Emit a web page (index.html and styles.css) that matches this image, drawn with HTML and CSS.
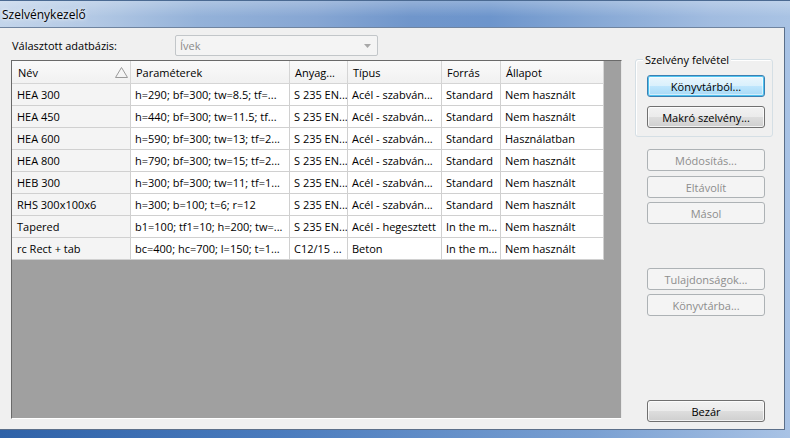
FILE: index.html
```html
<!DOCTYPE html>
<html lang="hu">
<head>
<meta charset="utf-8">
<title>Szelvénykezelő</title>
<link rel="stylesheet" href="styles.css">
</head>
<body>
<div class="frame">
  <div class="titlebar"><span class="title">Szelvénykezelő</span></div>
  <div class="client">
    <div class="main">
      <div class="dbrow">
        <span class="dblabel">Választott adatbázis:</span>
        <div class="combo">
          <span class="combo-text">Ívek</span>
          <svg class="combo-arrow" width="7" height="4" viewBox="0 0 7 4"><polygon points="0,0 7,0 3.5,4" fill="#a8a8a8"/></svg>
        </div>
      </div>
      <div class="list">
        <table class="grid">
          <colgroup>
            <col class="c1"><col class="c2"><col class="c3"><col class="c4"><col class="c5"><col class="c6">
          </colgroup>
          <thead>
            <tr>
              <th class="first"><div class="th-inner"><span>Név</span><svg class="sort" width="13" height="11" viewBox="0 0 13 11"><polygon points="6.5,0.5 12.5,10.5 0.5,10.5" fill="none" stroke="#9a9a9a" stroke-width="1"/></svg></div></th>
              <th>Paraméterek</th>
              <th>Anyag...</th>
              <th>Típus</th>
              <th>Forrás</th>
              <th>Állapot</th>
            </tr>
          </thead>
          <tbody>
            <tr><td class="first">HEA 300</td><td>h=290; bf=300; tw=8.5; tf=...</td><td>S 235 EN...</td><td>Acél - szabván...</td><td>Standard</td><td>Nem használt</td></tr>
            <tr><td class="first">HEA 450</td><td>h=440; bf=300; tw=11.5; tf...</td><td>S 235 EN...</td><td>Acél - szabván...</td><td>Standard</td><td>Nem használt</td></tr>
            <tr><td class="first">HEA 600</td><td>h=590; bf=300; tw=13; tf=2...</td><td>S 235 EN...</td><td>Acél - szabván...</td><td>Standard</td><td>Használatban</td></tr>
            <tr><td class="first">HEA 800</td><td>h=790; bf=300; tw=15; tf=2...</td><td>S 235 EN...</td><td>Acél - szabván...</td><td>Standard</td><td>Nem használt</td></tr>
            <tr><td class="first">HEB 300</td><td>h=300; bf=300; tw=11; tf=1...</td><td>S 235 EN...</td><td>Acél - szabván...</td><td>Standard</td><td>Nem használt</td></tr>
            <tr><td class="first">RHS 300x100x6</td><td>h=300; b=100; t=6; r=12</td><td>S 235 EN...</td><td>Acél - szabván...</td><td>Standard</td><td>Nem használt</td></tr>
            <tr><td class="first">Tapered</td><td>b1=100; tf1=10; h=200; tw=...</td><td>S 235 EN...</td><td>Acél - hegesztett</td><td>In the m...</td><td>Nem használt</td></tr>
            <tr><td class="first">rc Rect + tab</td><td>bc=400; hc=700; l=150; t=1...</td><td>C12/15 ...</td><td>Beton</td><td>In the m...</td><td>Nem használt</td></tr>
          </tbody>
        </table>
      </div>
    </div>
    <div class="side">
      <div class="group">
        <span class="group-label">Szelvény felvétel</span>
        <button class="btn default">Könyvtárból...</button>
        <button class="btn gap9">Makró szelvény...</button>
      </div>
      <button class="btn disabled m12">Módosítás...</button>
      <button class="btn disabled m5">Eltávolít</button>
      <button class="btn disabled m4">Másol</button>
      <button class="btn disabled m44">Tulajdonságok...</button>
      <button class="btn disabled m4">Könyvtárba...</button>
      <button class="btn close">Bezár</button>
    </div>
  </div>
</div>
</body>
</html>
```

FILE: styles.css
```css
html, body {
  margin: 0;
  padding: 0;
  width: 790px;
  height: 438px;
  overflow: hidden;
}

body {
  font-family: "Open Sans", "Noto Sans", sans-serif;
  font-size: 11px;
  color: #000;
  background: linear-gradient(to right, #2f62a8 0%, #4a7bbd 35%, #7aa0d2 75%, #a9c3e5 100%);
}

.frame {
  display: flex;
  flex-direction: column;
  width: 790px;
  height: 438px;
}

.titlebar {
  height: 26px;
  border-top: 1px solid #4b6a92;
  display: flex;
  align-items: center;
  padding-left: 2px;
  background:
    linear-gradient(to bottom, rgba(255,255,255,0.25), rgba(255,255,255,0) 60%),
    linear-gradient(to right, #c3d5eb 0%, #b2c8e4 12%, #94b2d9 25%, #86a6d3 40%, #7096cb 52%, #6d95cc 62%, #86a8d5 75%, #a1bce0 90%, #a9c3e4 100%);
}

.title {
  font-size: 12px;
  color: #000;
  text-shadow: 0 0 6px rgba(255,255,255,0.9), 0 0 3px rgba(255,255,255,0.8);
}

.client {
  display: flex;
  width: 784px;
  height: 401px;
  background: #f0f0f0;
  border-top: 1px solid #6f84a0;
  border-right: 1px solid #5b6f8a;
  border-bottom: 1px solid #5b6f8a;
}

.main {
  display: flex;
  flex-direction: column;
  padding-left: 11px;
  padding-top: 7px;
  width: 611px;
}

.dbrow {
  display: flex;
  align-items: center;
  height: 21px;
}

.dblabel {
  width: 163px;
  padding-left: 1px;
}

.combo {
  width: 201px;
  height: 19px;
  border: 1px solid #c2c6c9;
  border-radius: 2px;
  background: #f4f4f4;
  display: flex;
  align-items: center;
  justify-content: space-between;
  padding: 0 6px 0 4px;
  box-sizing: border-box;
  width: 203px;
  height: 21px;
  color: #8a8a8a;
}

.list {
  margin-top: 4px;
  width: 611px;
  height: 359px;
  box-sizing: border-box;
  background: #a0a0a0;
  border-top: 1px solid #6a6a6a;
  border-left: 1px solid #6a6a6a;
  border-right: 1px solid #e8e8e8;
  border-bottom: 1px solid #ffffff;
}

.grid {
  border-collapse: separate;
  border-spacing: 0;
  table-layout: fixed;
  width: 592px;
  background: #fff;
}

.c1 { width: 119px; }
.c2 { width: 159px; }
.c3 { width: 58px; }
.c4 { width: 94px; }
.c5 { width: 59px; }
.c6 { width: 103px; }

.grid th {
  height: 23px;
  padding: 0 0 0 5px;
  text-align: left;
  font-weight: normal;
  background: linear-gradient(#fafafa, #f1f1f1);
  border-right: 1px solid #d5d5d5;
  border-bottom: 1px solid #d5d5d5;
  white-space: nowrap;
  overflow: hidden;
  box-sizing: border-box;
}

.grid th.first {
  padding-left: 6px;
}

.th-inner {
  display: flex;
  align-items: center;
  justify-content: space-between;
  padding-right: 2px;
}

.sort {
  display: block;
}

.grid td {
  height: 21px;
  padding: 0 0 0 4px;
  border-right: 1px solid #d0d0d0;
  border-bottom: 1px solid #d0d0d0;
  white-space: nowrap;
  overflow: hidden;
  box-sizing: content-box;
  line-height: 21px;
}

.grid td.first {
  padding-left: 5px;
  background: #f4f4f4;
}

.side {
  display: flex;
  flex-direction: column;
  margin-left: 13px;
  padding-top: 31px;
  padding-bottom: 7px;
  width: 138px;
}

.group {
  position: relative;
  height: 78px;
  box-sizing: border-box;
  border: 1px solid #d5dfe5;
  border-radius: 3px;
  box-shadow: inset 1px 1px 0 #fff;
  padding: 15px 0 0 11px;
  display: flex;
  flex-direction: column;
}

.group-label {
  position: absolute;
  top: -8px;
  left: 7px;
  padding: 0 2px;
  background: #f0f0f0;
  line-height: 15px;
}

.btn {
  font-family: inherit;
  font-size: 11px;
  width: 118px;
  height: 22px;
  box-sizing: border-box;
  padding: 0;
  margin: 0;
  border: 1px solid #707070;
  border-radius: 3px;
  color: #000;
  background: linear-gradient(#f2f2f2 0%, #ebebeb 50%, #dddddd 51%, #cfcfcf 100%);
  box-shadow: inset 0 0 0 1px rgba(255,255,255,0.75);
  text-align: center;
  align-self: flex-start;
  margin-left: 12px;
}

.group .btn {
  margin-left: 0;
}

.btn.default {
  border-color: #3c7fb1;
  background: linear-gradient(#eaf6fd 0%, #d9f0fc 50%, #bee6fd 51%, #a7d9f5 100%);
  box-shadow: inset 0 0 0 1px #4fc3f0, inset 0 0 0 2px rgba(255,255,255,0.5);
}

.btn.disabled {
  border-color: #adb2b5;
  background: #f4f4f4;
  color: #8d8d8d;
  box-shadow: none;
}

.gap9 { margin-top: 9px; }
.m12 { margin-top: 12px; }
.m5 { margin-top: 5px; }
.m4 { margin-top: 4px; }
.m44 { margin-top: 44px; }
.close { margin-top: auto; }
```
